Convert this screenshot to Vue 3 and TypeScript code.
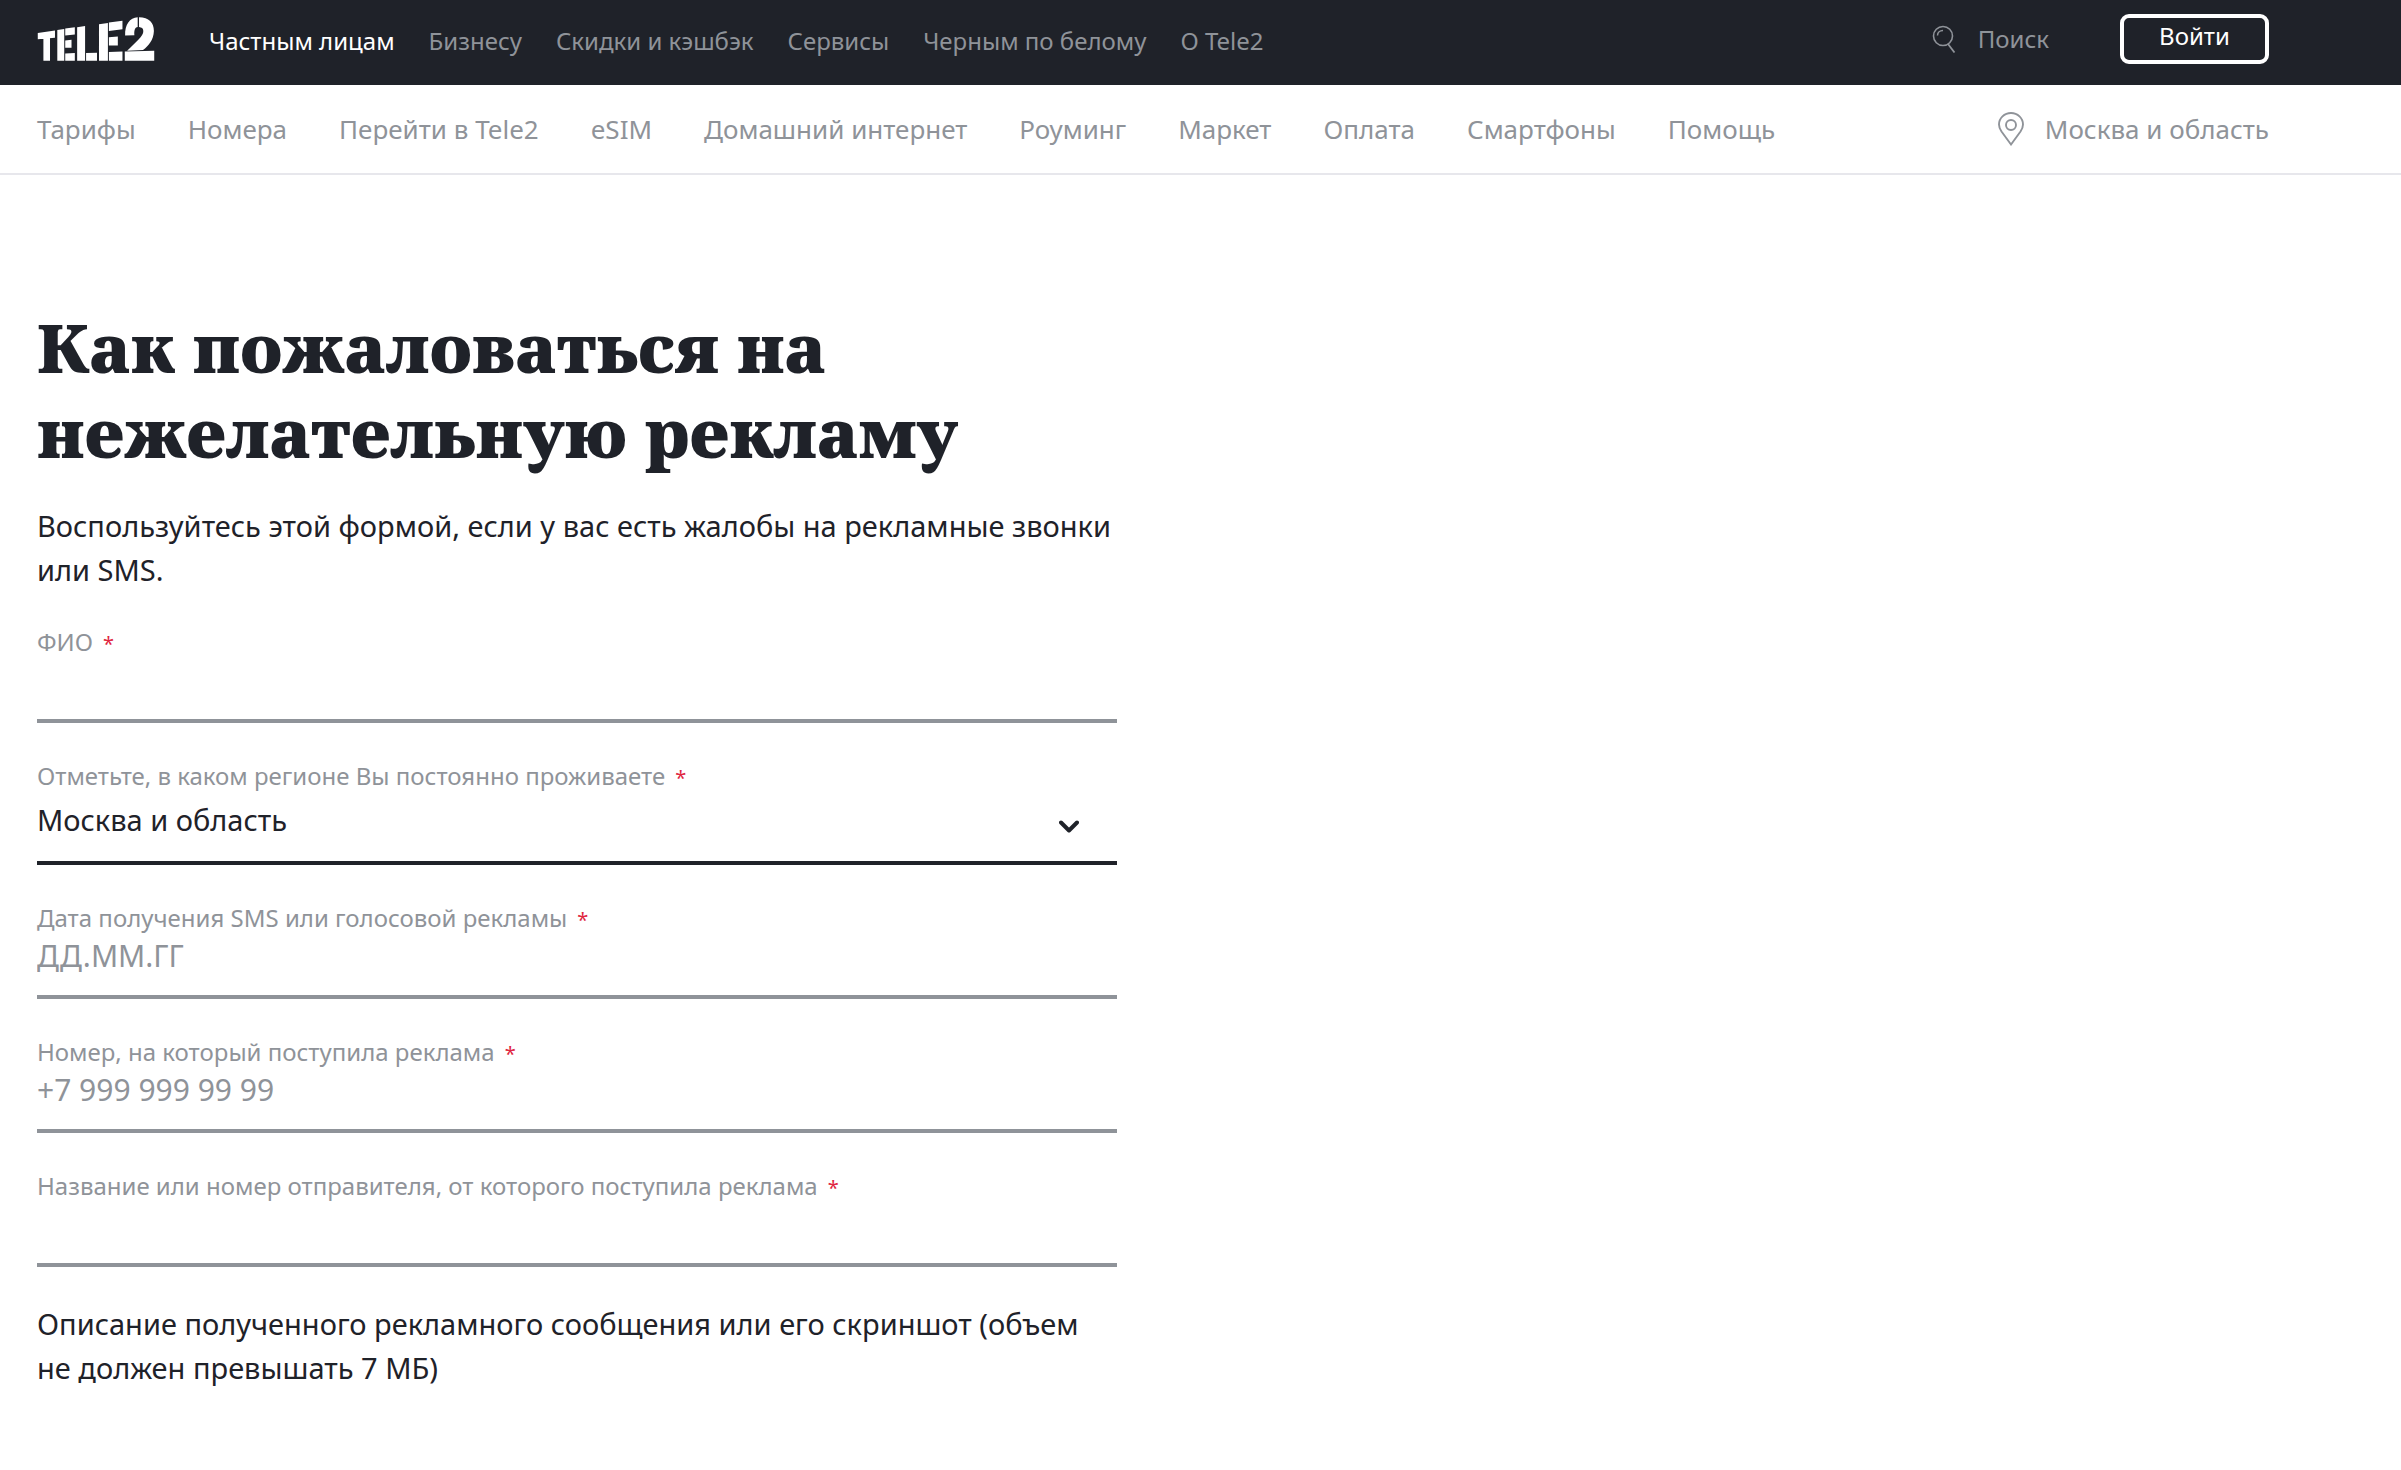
<script setup lang="ts">
import { ref } from 'vue'

interface Field {
  id: string
  label: string
  placeholder?: string
  options?: string[]
}

const sections = ['Частным лицам', 'Бизнесу', 'Скидки и кэшбэк', 'Сервисы', 'Черным по белому', 'О Tele2']
const pages = [
  'Тарифы', 'Номера', 'Перейти в Tele2', 'eSIM', 'Домашний интернет',
  'Роуминг', 'Маркет', 'Оплата', 'Смартфоны', 'Помощь',
]

const fields: Field[] = [
  { id: 'name', label: 'ФИО' },
  { id: 'region', label: 'Отметьте, в каком регионе Вы постоянно проживаете', options: ['Москва и область'] },
  { id: 'date', label: 'Дата получения SMS или голосовой рекламы', placeholder: 'ДД.ММ.ГГ' },
  { id: 'phone', label: 'Номер, на который поступила реклама', placeholder: '+7 999 999 99 99' },
  { id: 'sender', label: 'Название или номер отправителя, от которого поступила реклама' },
]

const values = ref<Record<string, string>>({ name: '', region: 'Москва и область', date: '', phone: '', sender: '' })
</script>

<template>
  <div class="page">
    <header>
      <div class="topbar">
        <div class="container topbar-row">
          <a class="logo" href="#" aria-label="Tele2">
            <svg viewBox="51 38 354 133" width="118" height="44" fill="currentColor" aria-hidden="true">
              <path d="M52 86 104 79V101L52 105ZM69 103 89 101V170H69Z" />
              <path d="M111 77 132 74V170H111ZM135 73 164 69V91L135 94ZM135 109 154 107V131H135ZM135 148 164 147V170H135Z" />
              <path d="M171 69 195 65V170H171ZM198 147 231 146V170H198Z" />
              <path d="M237 60 264 56V170H237ZM267 55 308 49V75L267 80ZM267 99 294 97V124H267ZM267 144 308 142V170H267Z" />
              <path d="M315 142 404 140V170H315Z" />
              <path d="M316 94C315 60 330 41 354 39V68C345 70 343 78 344 93Z" />
              <path d="M358 39C388 39 403 56 403 80C402 108 387 124 370 138L322 140C348 113 372 96 371 80C371 72 366 69 358 68Z" />
            </svg>
          </a>
          <nav class="sections" aria-label="Разделы">
            <a v-for="(item, i) in sections" :key="item" href="#" :class="{ active: i === 0 }">{{ item }}</a>
          </nav>
          <a class="search" href="#">
            <svg viewBox="0 0 24 28" width="24" height="28" fill="none" stroke="currentColor" aria-hidden="true">
              <circle cx="11" cy="11" r="9.5" stroke-width="1.6" />
              <path d="M5.5 10.5C5.5 7.5 8 5.5 11 5.5" stroke-width="1.5" />
              <path d="M16 19 22.5 27.5" stroke-width="1.8" />
            </svg>
            <span>Поиск</span>
          </a>
          <button class="login" type="button">Войти</button>
        </div>
      </div>
      <div class="subbar">
        <div class="container subbar-row">
          <nav class="pages" aria-label="Страницы">
            <a v-for="item in pages" :key="item" href="#">{{ item }}</a>
          </nav>
          <a class="region" href="#">
            <svg viewBox="0 0 26 34" width="26" height="34" fill="none" stroke="currentColor" stroke-width="1.9" aria-hidden="true">
              <path d="M13 32.5 3.5 19.5C1.8 17 1 15 1 12.5a12 11.5 0 0 1 24 0C25 15 24.2 17 22.5 19.5Z" />
              <circle cx="13" cy="13" r="5" />
            </svg>
            <span>Москва и область</span>
          </a>
        </div>
      </div>
    </header>

    <main class="container">
      <div class="content">
        <h1>Как пожаловаться на нежелательную рекламу</h1>
        <p>Воспользуйтесь этой формой, если у вас есть жалобы на рекламные звонки или SMS.</p>
        <form @submit.prevent>
          <div v-for="field in fields" :key="field.id" class="field">
            <label :for="field.id">{{ field.label }}<span class="required">*</span></label>
            <div v-if="field.options" class="select">
              <select :id="field.id" v-model="values[field.id]">
                <option v-for="option in field.options" :key="option">{{ option }}</option>
              </select>
              <svg viewBox="0 0 20 13" width="20" height="13" fill="none" stroke="currentColor" stroke-width="4" stroke-linecap="round" stroke-linejoin="round" aria-hidden="true">
                <path d="M2 2.5 10 10.5 18 2.5" />
              </svg>
            </div>
            <input v-else :id="field.id" v-model="values[field.id]" type="text" :placeholder="field.placeholder">
          </div>
        </form>
        <p class="note">Описание полученного рекламного сообщения или его скриншот (объем не должен превышать 7 МБ)</p>
      </div>
    </main>
  </div>
</template>

<style>
body {
  background: #fff;
}
</style>

<style scoped>
.page {
  font-family: "Noto Sans", "Open Sans", sans-serif;
  color: #1f2229;
}

.page * {
  box-sizing: border-box;
}

a {
  color: inherit;
  text-decoration: none;
}

svg {
  display: block;
  flex: none;
}

.container {
  max-width: 2306px;
  padding: 0 37px;
}

.topbar {
  background: #1f2229;
  color: #8f9399;
  font-size: 24px;
  line-height: 30px;
}

.topbar-row {
  display: flex;
  align-items: center;
  height: 85px;
  padding-bottom: 7px;
  white-space: nowrap;
}

.logo {
  margin-right: 54px;
  color: #fff;
}

.sections {
  display: flex;
  gap: 34px;
  padding-top: 3px;
}

.sections .active {
  color: #fff;
}

.search {
  display: flex;
  align-items: center;
  gap: 22px;
  margin-left: auto;
}

.login {
  width: 149px;
  height: 50px;
  margin-left: 71px;
  padding: 0 0 6px;
  border: 4px solid #fff;
  border-radius: 9px;
  background: none;
  color: #fff;
  font: inherit;
}

.subbar {
  border-bottom: 2px solid #e7e7ec;
  color: #8f9399;
  font-size: 26px;
  line-height: 32px;
}

.subbar-row {
  display: flex;
  align-items: center;
  justify-content: space-between;
  height: 88px;
  white-space: nowrap;
}

.pages {
  display: flex;
  gap: 52px;
}

.region {
  display: flex;
  align-items: center;
  gap: 21px;
}

.content {
  max-width: 1080px;
  padding: 129px 0 81px;
}

h1 {
  margin: 0 0 30px;
  font-family: "Noto Serif", "DejaVu Serif Condensed", "DejaVu Serif", serif;
  font-size: 68px;
  font-weight: 900;
  line-height: 85px;
}

p {
  margin: 0;
  font-size: 29px;
  line-height: 44px;
}

.note {
  padding-right: 24px;
}

form {
  display: flex;
  flex-direction: column;
  gap: 37px;
  margin: 34px 0 35px;
}

label {
  display: block;
  color: #8f9399;
  font-size: 24px;
  line-height: 32px;
}

.required {
  margin-left: 10px;
  color: #e0263f;
  font-size: 20px;
  line-height: 1;
}

input,
select {
  display: block;
  width: 100%;
  border: 0;
  border-bottom: 4px solid #8f9399;
  border-radius: 0;
  outline: none;
  background: none;
  color: #1f2229;
  font: inherit;
  font-size: 29px;
  line-height: 36px;
}

input {
  height: 65px;
  padding: 3px 0 22px;
  font-size: 30px;
}

input::placeholder {
  color: #8f9399;
  opacity: 1;
}

.select {
  position: relative;
}

select {
  height: 73px;
  padding: 10px 60px 23px 0;
  border-color: #1f2229;
  appearance: none;
}

.select svg {
  position: absolute;
  top: 28px;
  right: 38px;
  pointer-events: none;
}
</style>
